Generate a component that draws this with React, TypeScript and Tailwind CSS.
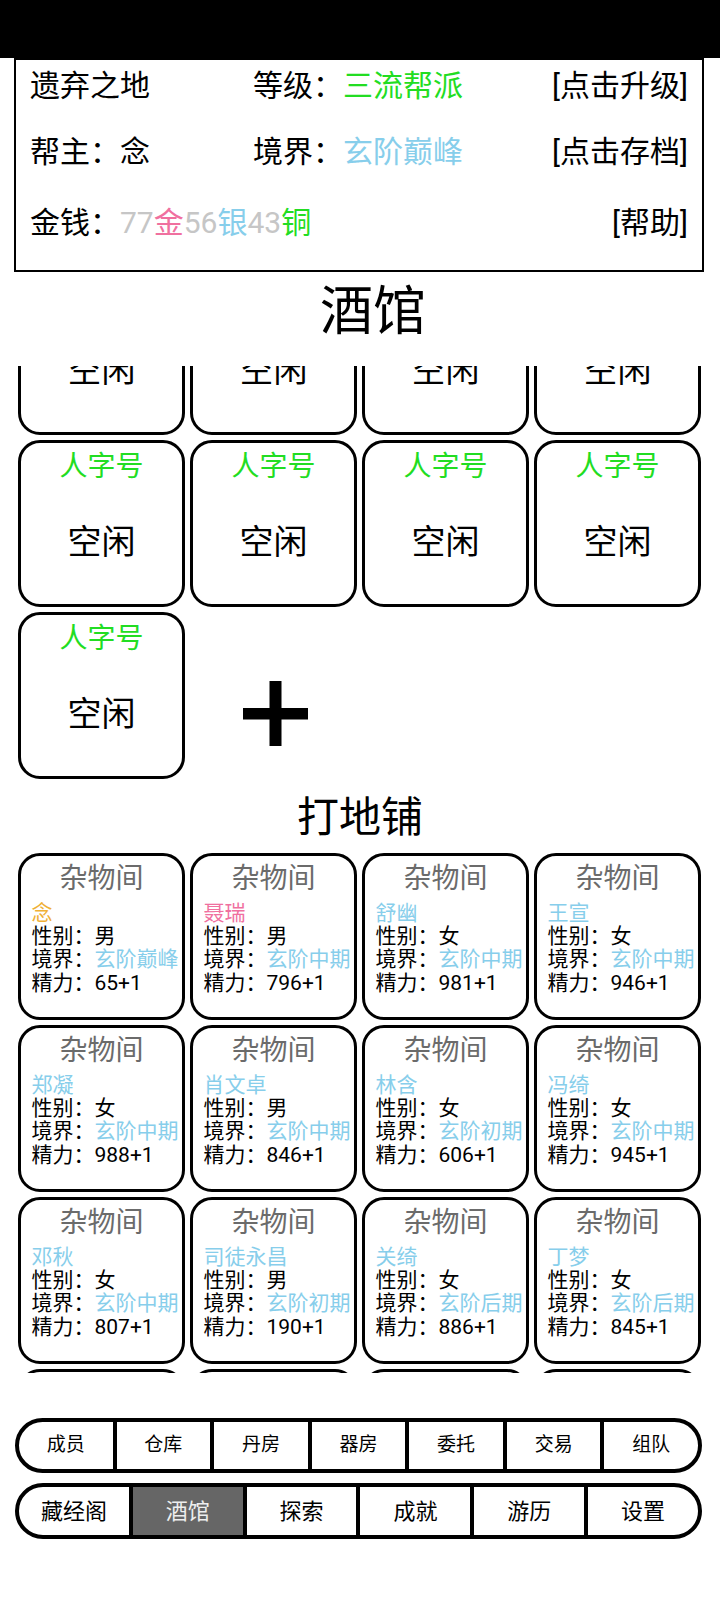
import type { ReactNode } from 'react';

// Roboto first so digits and brackets get the wider Latin shapes of the reference
const FONT = 'Roboto, "Noto Sans CJK SC", "Noto Sans", sans-serif';

const GREEN = 'text-[#22dd22]';
const BLUE = 'text-[#87ceeb]';
const PINK = 'text-[#f0709f]';
const GRAY = 'text-[#c6c6c6]';

interface Lodger {
  name: string;
  nameColor: string;
  gender: string;
  realm: string;
  energy: string;
}

const lodgers: Lodger[] = [
  { name: '念', nameColor: 'text-[#efb035]', gender: '男', realm: '玄阶巅峰', energy: '65+1' },
  { name: '聂瑞', nameColor: PINK, gender: '男', realm: '玄阶中期', energy: '796+1' },
  { name: '舒幽', nameColor: BLUE, gender: '女', realm: '玄阶中期', energy: '981+1' },
  { name: '王宣', nameColor: BLUE, gender: '女', realm: '玄阶中期', energy: '946+1' },
  { name: '郑凝', nameColor: BLUE, gender: '女', realm: '玄阶中期', energy: '988+1' },
  { name: '肖文卓', nameColor: BLUE, gender: '男', realm: '玄阶中期', energy: '846+1' },
  { name: '林含', nameColor: BLUE, gender: '女', realm: '玄阶初期', energy: '606+1' },
  { name: '冯绮', nameColor: BLUE, gender: '女', realm: '玄阶中期', energy: '945+1' },
  { name: '邓秋', nameColor: BLUE, gender: '女', realm: '玄阶中期', energy: '807+1' },
  { name: '司徒永昌', nameColor: BLUE, gender: '男', realm: '玄阶初期', energy: '190+1' },
  { name: '关绮', nameColor: BLUE, gender: '女', realm: '玄阶后期', energy: '886+1' },
  { name: '丁梦', nameColor: BLUE, gender: '女', realm: '玄阶后期', energy: '845+1' },
  // fourth row is scrolled out of view, only its top edge shows
  { name: '周岚', nameColor: BLUE, gender: '女', realm: '玄阶中期', energy: '712+1' },
  { name: '韩青', nameColor: BLUE, gender: '男', realm: '玄阶初期', energy: '533+1' },
  { name: '许瑶', nameColor: BLUE, gender: '女', realm: '玄阶中期', energy: '874+1' },
  { name: '陆川', nameColor: BLUE, gender: '男', realm: '玄阶初期', energy: '402+1' },
];

const topTabs = ['成员', '仓库', '丹房', '器房', '委托', '交易', '组队'];
const bottomTabs = ['藏经阁', '酒馆', '探索', '成就', '游历', '设置'];

function InfoRow({ left, middle, right, className }: { left: ReactNode; middle?: ReactNode; right: ReactNode; className?: string }) {
  return (
    <div className={`flex h-[36px] items-center leading-[36px] whitespace-nowrap ${className ?? ''}`}>
      <div className="w-[223px]">{left}</div>
      <div className="flex-1">{middle}</div>
      <div className="text-right">{right}</div>
    </div>
  );
}

function Card({ children }: { children: ReactNode }) {
  return (
    <div className="h-[167px] w-[167px] rounded-[22px] border-[3px] border-black bg-white overflow-hidden">
      {children}
    </div>
  );
}

function TavernCard() {
  return (
    <Card>
      <div className="flex flex-col items-center">
        <div className={`mt-[4px] h-[40px] text-[28px] leading-[40px] ${GREEN}`}>人字号</div>
        <div className="mt-[30px] h-[50px] text-[34px] leading-[50px] text-black">空闲</div>
      </div>
    </Card>
  );
}

function LodgerCard({ l }: { l: Lodger }) {
  return (
    <Card>
      <div className="pt-[2.5px]">
        <div className="h-[40px] text-center text-[28px] leading-[40px] text-[#6b6b6b]">杂物间</div>
        <div className="mt-[3px] pl-[10.5px] text-[21px] leading-[23.4px] whitespace-nowrap">
          <div className={l.nameColor}>{l.name}</div>
          <div>性别：{l.gender}</div>
          <div>
            境界：<span className={BLUE}>{l.realm}</span>
          </div>
          <div>精力：{l.energy}</div>
        </div>
      </div>
    </Card>
  );
}

function PlusCell() {
  return (
    <div className="h-[167px] w-[167px] pl-[53px] pt-[69px]">
      <svg width="65" height="65" viewBox="0 0 65 65" aria-hidden="true">
        <rect x="26.5" y="0" width="12" height="65" fill="#000" />
        <rect x="0" y="27" width="65" height="11.5" fill="#000" />
      </svg>
    </div>
  );
}

export default function App() {
  return (
    <div className="relative h-[1600px] w-[720px] overflow-hidden bg-white text-black" style={{ fontFamily: FONT }}>
      {/* status bar */}
      <div className="h-[58px] bg-black" />

      {/* sect info box */}
      <div className="ml-[14px] h-[214px] w-[690px] border-2 border-black px-[14px] pt-[8px] text-[30px]">
        <InfoRow
          left="遗弃之地"
          middle={
            <>
              等级：<span className={GREEN}>三流帮派</span>
            </>
          }
          right="[点击升级]"
        />
        <InfoRow
          className="mt-[30px]"
          left="帮主：念"
          middle={
            <>
              境界：<span className={BLUE}>玄阶巅峰</span>
            </>
          }
          right="[点击存档]"
        />
        <div className="mt-[35px] flex h-[36px] items-center justify-between leading-[36px] whitespace-nowrap">
          <div>
            金钱：<span className={GRAY}>77</span>
            <span className={PINK}>金</span>
            <span className={GRAY}>56</span>
            <span className={BLUE}>银</span>
            <span className={GRAY}>43</span>
            <span className={GREEN}>铜</span>
          </div>
          <div>[帮助]</div>
        </div>
      </div>

      {/* tavern */}
      <div className="flex h-[94px] items-center justify-center pb-[12px] pl-[26px] text-[53px]">酒馆</div>
      <div className="h-[416px] overflow-hidden pl-[18px]">
        <div className="mt-[-98px] grid grid-cols-[repeat(4,167px)] gap-[5px]">
          {Array.from({ length: 9 }).map((_, i) => (
            <TavernCard key={i} />
          ))}
          <PlusCell />
        </div>
      </div>

      {/* lodging */}
      <div className="flex h-[71px] items-center justify-center text-[42px]">打地铺</div>
      <div className="h-[520px] overflow-hidden pl-[18px]">
        <div className="grid grid-cols-[repeat(4,167px)] gap-[5px]">
          {lodgers.map((l) => (
            <LodgerCard key={l.name} l={l} />
          ))}
        </div>
      </div>

      {/* bottom navigation */}
      <div className="mt-[45px] ml-[15px] flex h-[55px] w-[687px] overflow-hidden rounded-full border-4 border-black">
        {topTabs.map((t, i) => (
          <div
            key={t}
            className={`flex flex-1 items-center justify-center text-[19px] ${i > 0 ? 'border-l-4 border-black' : ''}`}
          >
            {t}
          </div>
        ))}
      </div>
      <div className="mt-[10px] ml-[15px] flex h-[56px] w-[687px] overflow-hidden rounded-full border-4 border-black">
        {bottomTabs.map((t, i) => (
          <div
            key={t}
            className={`flex flex-1 items-center justify-center text-[22px] ${i > 0 ? 'border-l-4 border-black' : ''} ${
              t === '酒馆' ? 'bg-[#666666] text-[#eeeeee]' : ''
            }`}
          >
            {t}
          </div>
        ))}
      </div>
    </div>
  );
}
